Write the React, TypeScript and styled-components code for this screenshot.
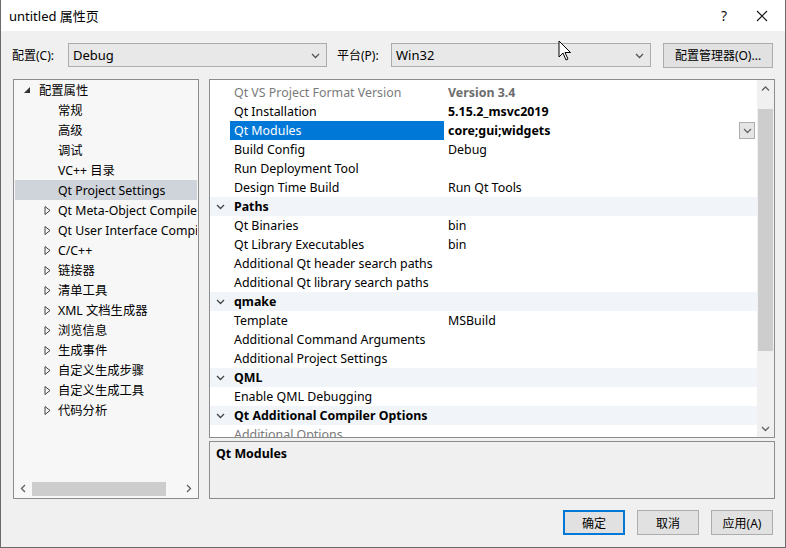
import React from "react";
import styled, { createGlobalStyle } from "styled-components";

const GlobalStyle = createGlobalStyle`
  html, body {
    margin: 0;
    padding: 0;
    background: #f0f0f0;
  }
  body {
    font-family: "Noto Sans", "Noto Sans CJK SC", sans-serif;
    font-size: 12px;
    color: #000;
  }
`;

const Window = styled.div`
  position: relative;
  width: 786px;
  height: 548px;
  box-sizing: border-box;
  background: #f0f0f0;
  border: 1px solid #6b6b6b;
  border-top: none;
  display: flex;
  flex-direction: column;
  overflow: hidden;
`;

const TitleBar = styled.div`
  height: 31px;
  background: #fff;
  display: flex;
  align-items: center;
  padding-left: 8px;
  font-size: 13px;
`;

const TitleText = styled.div`
  flex: 1;
`;

const TitleButton = styled.div<{ $w: number }>`
  width: ${(p) => p.$w}px;
  height: 31px;
  display: flex;
  align-items: center;
  justify-content: center;
  font-size: 14px;
  color: #111;
`;

const ConfigRow = styled.div`
  display: flex;
  align-items: center;
  height: 24px;
  margin-top: 12px;
  padding-left: 11px;
`;

const Label = styled.div<{ $w: number }>`
  width: ${(p) => p.$w}px;
`;

const Combo = styled.div<{ $w: number }>`
  width: ${(p) => p.$w}px;
  height: 24px;
  box-sizing: border-box;
  border: 1px solid #acacac;
  background: #e8e8e8;
  display: flex;
  align-items: center;
  padding-left: 4px;
  padding-right: 6px;
`;

const ComboText = styled.div`
  flex: 1;
  font-size: 13px;
`;

const Button = styled.div<{ $w: number; $default?: boolean }>`
  width: ${(p) => p.$w}px;
  height: 25px;
  box-sizing: border-box;
  border: ${(p) => (p.$default ? "2px solid #0078d7" : "1px solid #adadad")};
  background: #e1e1e1;
  display: flex;
  align-items: center;
  justify-content: center;
`;

const Main = styled.div`
  display: flex;
  margin-top: 12px;
  padding-left: 12px;
  gap: 10px;
  height: 421px;
`;

const Tree = styled.div`
  width: 186px;
  height: 420px;
  box-sizing: border-box;
  border: 1px solid #8c8c8c;
  background: #f7f7f7;
  display: flex;
  flex-direction: column;
  padding: 0 1px;
`;

const TreeList = styled.div`
  flex: 1;
  overflow: hidden;
`;

const TreeItem = styled.div<{ $selected?: boolean; $level: number }>`
  height: 20px;
  display: flex;
  align-items: center;
  white-space: nowrap;
  font-size: 12.3px;
  background: ${(p) => (p.$selected ? "#cfd3da" : "transparent")};
  padding-left: ${(p) => (p.$level === 0 ? 8 : 29)}px;
`;

const Expander = styled.div<{ $level: number }>`
  width: ${(p) => (p.$level === 0 ? 16 : 14)}px;
  display: flex;
  align-items: center;
  justify-content: flex-start;
  flex: none;
`;

const HScroll = styled.div`
  height: 17px;
  display: flex;
  align-items: center;
  margin-bottom: 1px;
`;

const ScrollArrow = styled.div`
  width: 17px;
  height: 17px;
  display: flex;
  align-items: center;
  justify-content: center;
`;

const HThumb = styled.div`
  width: 134px;
  height: 14px;
  background: #cdcdcd;
`;

const HTrack = styled.div`
  flex: 1;
  display: flex;
`;

const Right = styled.div`
  width: 566px;
  display: flex;
  flex-direction: column;
  gap: 3px;
`;

const Grid = styled.div`
  height: 359px;
  box-sizing: border-box;
  border: 1px solid #8c8c8c;
  background: #fff;
  display: flex;
`;

const GridBody = styled.div`
  flex: 1;
  padding-top: 3px;
  overflow: hidden;
`;

const GridRow = styled.div<{ $category?: boolean }>`
  height: 19px;
  display: flex;
  align-items: center;
  font-size: 12.4px;
  background: ${(p) => (p.$category ? "#f1f5fa" : "transparent")};
  font-weight: ${(p) => (p.$category ? 700 : 400)};
  white-space: nowrap;
`;

const Gutter = styled.div`
  width: 20px;
  flex: none;
  display: flex;
  align-items: center;
  justify-content: center;
`;

const NameCell = styled.div<{ $selected?: boolean; $muted?: boolean }>`
  width: 214px;
  height: 19px;
  flex: none;
  box-sizing: border-box;
  padding-left: 4px;
  display: flex;
  align-items: center;
  background: ${(p) => (p.$selected ? "#0078d7" : "transparent")};
  color: ${(p) => (p.$selected ? "#fff" : p.$muted ? "#7a7a7a" : "#000")};
`;

const ValueCell = styled.div<{ $bold?: boolean; $muted?: boolean }>`
  flex: 1;
  padding-left: 4px;
  display: flex;
  align-items: center;
  font-weight: ${(p) => (p.$bold ? 700 : 400)};
  color: ${(p) => (p.$muted ? "#6d6d6d" : "#000")};
`;

const CategoryLabel = styled.div`
  padding-left: 4px;
`;

const DropButton = styled.div`
  margin-left: auto;
  margin-right: 2px;
  width: 16px;
  height: 17px;
  box-sizing: border-box;
  border: 1px solid #adadad;
  background: #e5e5e5;
  display: flex;
  align-items: center;
  justify-content: center;
`;

const VScroll = styled.div`
  width: 17px;
  background: #f0f0f0;
  display: flex;
  flex-direction: column;
`;

const VTrack = styled.div`
  flex: 1;
  display: flex;
  flex-direction: column;
  padding-top: 12px;
`;

const VThumb = styled.div`
  height: 242px;
  margin: 0 1px;
  background: #cdcdcd;
`;

const Description = styled.div`
  height: 58px;
  box-sizing: border-box;
  border: 1px solid #8c8c8c;
  background: #f0f0f0;
  padding: 3px 6px;
  font-weight: 700;
  font-size: 12.4px;
`;

const Footer = styled.div`
  display: flex;
  justify-content: flex-end;
  gap: 12px;
  padding-right: 12px;
  margin-top: 10px;
`;

const Cursor = styled.svg`
  position: absolute;
  left: 557px;
  top: 40px;
`;

const Chevron = ({ dir = "down", color = "#555" }: { dir?: "down" | "up" | "left" | "right"; color?: string }) => {
  const pts = {
    down: "1,3 4.5,6.5 8,3",
    up: "1,6.5 4.5,3 8,6.5",
    left: "6,1 2.5,4.5 6,8",
    right: "3,1 6.5,4.5 3,8",
  }[dir];
  return (
    <svg width="9" height="9" viewBox="0 0 9 9">
      <polyline points={pts} fill="none" stroke={color} strokeWidth="1.3" />
    </svg>
  );
};

const OutlineTriangle = () => (
  <svg width="7" height="9" viewBox="0 0 7 9">
    <polygon points="1,0.5 6,4.5 1,8.5" fill="none" stroke="#444" strokeWidth="1" />
  </svg>
);

const FilledTriangle = () => (
  <svg width="8" height="8" viewBox="0 0 8 8">
    <polygon points="7,1 7,7 1,7" fill="#333" />
  </svg>
);

const treeItems: { label: string; level: number; expandable?: boolean; selected?: boolean }[] = [
  { label: "配置属性", level: 0, expandable: true },
  { label: "常规", level: 1 },
  { label: "高级", level: 1 },
  { label: "调试", level: 1 },
  { label: "VC++ 目录", level: 1 },
  { label: "Qt Project Settings", level: 1, selected: true },
  { label: "Qt Meta-Object Compiler", level: 1, expandable: true },
  { label: "Qt User Interface Compiler", level: 1, expandable: true },
  { label: "C/C++", level: 1, expandable: true },
  { label: "链接器", level: 1, expandable: true },
  { label: "清单工具", level: 1, expandable: true },
  { label: "XML 文档生成器", level: 1, expandable: true },
  { label: "浏览信息", level: 1, expandable: true },
  { label: "生成事件", level: 1, expandable: true },
  { label: "自定义生成步骤", level: 1, expandable: true },
  { label: "自定义生成工具", level: 1, expandable: true },
  { label: "代码分析", level: 1, expandable: true },
];

type Prop = {
  name: string;
  value?: string;
  category?: boolean;
  bold?: boolean;
  muted?: boolean;
  selected?: boolean;
};

const props: Prop[] = [
  { name: "Qt VS Project Format Version", value: "Version 3.4", muted: true, bold: true },
  { name: "Qt Installation", value: "5.15.2_msvc2019", bold: true },
  { name: "Qt Modules", value: "core;gui;widgets", bold: true, selected: true },
  { name: "Build Config", value: "Debug" },
  { name: "Run Deployment Tool" },
  { name: "Design Time Build", value: "Run Qt Tools" },
  { name: "Paths", category: true },
  { name: "Qt Binaries", value: "bin" },
  { name: "Qt Library Executables", value: "bin" },
  { name: "Additional Qt header search paths" },
  { name: "Additional Qt library search paths" },
  { name: "qmake", category: true },
  { name: "Template", value: "MSBuild" },
  { name: "Additional Command Arguments" },
  { name: "Additional Project Settings" },
  { name: "QML", category: true },
  { name: "Enable QML Debugging" },
  { name: "Qt Additional Compiler Options", category: true },
  { name: "Additional Options", muted: true },
];

export default function App() {
  return (
    <>
      <GlobalStyle />
      <Window>
        <TitleBar>
          <TitleText>untitled 属性页</TitleText>
          <TitleButton $w={30}>?</TitleButton>
          <TitleButton $w={46}>
            <svg width="12" height="12" viewBox="0 0 12 12">
              <path d="M1 1 L11 11 M11 1 L1 11" stroke="#111" strokeWidth="1.1" />
            </svg>
          </TitleButton>
        </TitleBar>

        <ConfigRow>
          <Label $w={56}>配置(C):</Label>
          <Combo $w={259}>
            <ComboText>Debug</ComboText>
            <Chevron />
          </Combo>
          <Label $w={54} style={{ marginLeft: 10 }}>平台(P):</Label>
          <Combo $w={260}>
            <ComboText>Win32</ComboText>
            <Chevron />
          </Combo>
          <Button $w={110} style={{ marginLeft: 12 }}>配置管理器(O)...</Button>
        </ConfigRow>

        <Main>
          <Tree>
            <TreeList>
              {treeItems.map((it) => (
                <TreeItem key={it.label} $level={it.level} $selected={it.selected}>
                  <Expander $level={it.level}>
                    {it.expandable && (it.level === 0 ? <FilledTriangle /> : <OutlineTriangle />)}
                  </Expander>
                  <span>{it.label}</span>
                </TreeItem>
              ))}
            </TreeList>
            <HScroll>
              <ScrollArrow>
                <Chevron dir="left" color="#606060" />
              </ScrollArrow>
              <HTrack>
                <HThumb />
              </HTrack>
              <ScrollArrow>
                <Chevron dir="right" color="#606060" />
              </ScrollArrow>
            </HScroll>
          </Tree>

          <Right>
            <Grid>
              <GridBody>
                {props.map((p) =>
                  p.category ? (
                    <GridRow key={p.name} $category>
                      <Gutter>
                        <Chevron color="#444" />
                      </Gutter>
                      <CategoryLabel>{p.name}</CategoryLabel>
                    </GridRow>
                  ) : (
                    <GridRow key={p.name}>
                      <Gutter />
                      <NameCell $selected={p.selected} $muted={p.muted}>
                        {p.name}
                      </NameCell>
                      <ValueCell $bold={p.bold} $muted={p.muted}>
                        {p.value}
                        {p.selected && (
                          <DropButton>
                            <Chevron color="#666" />
                          </DropButton>
                        )}
                      </ValueCell>
                    </GridRow>
                  )
                )}
              </GridBody>
              <VScroll>
                <ScrollArrow>
                  <Chevron dir="up" color="#606060" />
                </ScrollArrow>
                <VTrack>
                  <VThumb />
                </VTrack>
                <ScrollArrow>
                  <Chevron dir="down" color="#606060" />
                </ScrollArrow>
              </VScroll>
            </Grid>
            <Description>Qt Modules</Description>
          </Right>
        </Main>

        <Footer>
          <Button $w={62} $default>确定</Button>
          <Button $w={62}>取消</Button>
          <Button $w={62}>应用(A)</Button>
        </Footer>

        <Cursor width="14" height="22" viewBox="0 0 14 22">
          <path d="M1 1 L1 17 L5 13 L8 20 L10 19 L7 12.5 L12.5 12.5 Z" fill="#fff" stroke="#000" strokeWidth="1" />
        </Cursor>
      </Window>
    </>
  );
}
